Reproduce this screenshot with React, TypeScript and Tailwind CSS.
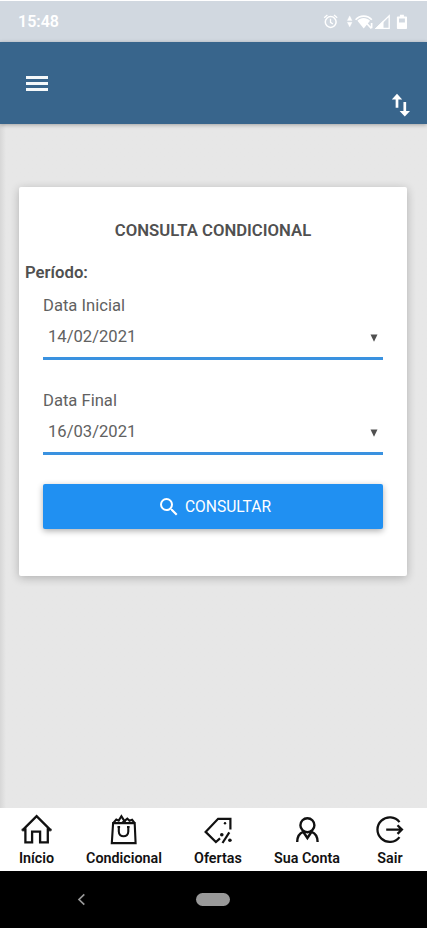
import type { ReactNode } from "react";

interface DateFieldProps {
  label: string;
  value: string;
}

interface NavItem {
  label: string;
  icon: ReactNode;
  width: string;
}

function StatusIcons() {
  return (
    <svg width="86" height="20" viewBox="0 0 86 20" fill="none" stroke="#fff">
      {/* alarm */}
      <circle cx="7.7" cy="10" r="5.4" strokeWidth="1.5" />
      <path d="M7.5 6.700v3.700l2.400 1.600M1.200 5.800l3.200-2.800M11 3l3.200 2.800" strokeWidth="1.3" />
      {/* data arrows */}
      <path d="M24.300 8.500 26.700 3.800 29.100 8.500zM24.300 10.300 26.700 15 29.100 10.300z" fill="#fff" strokeWidth=".3" />
      {/* wifi */}
      <path d="M32.600 7.800C36.800 2.900 44.600 2.900 48.800 7.800" strokeWidth="1.6" />
      <path d="M34.400 8.700C38 5.100 43.200 5.100 47 8.700L40.700 16.500z" fill="#fff" stroke="none" />
      <path d="M43.800 11.500 48.400 16.500M48.600 11v5.200" strokeWidth="1.7" />
      {/* signal */}
      <path d="M53.500 16.300 66.200 3.800V16.300z" strokeWidth="1.3" />
      <path d="M51.700 17 60.500 8.400V17z" fill="#fff" stroke="none" />
      {/* battery */}
      <path
        d="M74.700 4.500h2.200V2.700h4v1.800h2.300q.8 0 .8.8v10.900q0 .8-.8.8h-8.500q-.8 0-.8-.8V5.300q0-.8.8-.8zM76 6.600v3.800h5.900V6.600z"
        fill="#fff"
        fillRule="evenodd"
        stroke="none"
      />
    </svg>
  );
}

function HomeIcon() {
  return (
    <svg width="32" height="32" viewBox="0.6 0 32 32" fill="none" stroke="#111" strokeWidth="2.3">
      <path d="M2.200 17.100 16.200 3.200 30.200 17.100M5 15.200v14.200h6.700V18.600h8v10.800h7.700V15.200" />
      <path d="M1.700 15.800v2h3.300M30.700 15.800v2h-3.400" strokeWidth="1" />
    </svg>
  );
}

function BagIcon() {
  return (
    <svg width="32" height="32" viewBox="0.300 0.300 32 32" fill="none" stroke="#111" strokeWidth="2.1">
      <path d="M5.400 10.400h21.600l.9 20H4.100zM5.400 10.400 8.600 6.800 11 7.900 13.700 3.600 17.500 9.700M14.500 10.200l5.100-4.300 2.200 2.200 2.600-1 2.600 3.300" />
      <path d="M11.100 14.300v4.600c0 6.200 9.500 6.200 9.500 0V14.300M9.800 14.300h2.600M19.300 14.300h2.600" strokeWidth="2.1" />
    </svg>
  );
}

function TagIcon() {
  return (
    <svg width="32" height="32" viewBox="0 0 32 32" fill="none" stroke="#111" strokeWidth="2.200">
      <path d="M28.400 16.500V5.900L16.100 5.800 3.600 18.900 13.900 29 18 25.400" />
      <path d="M27.300 19.300 20.500 30" />
      <circle cx="23" cy="10.200" r="1.200" fill="#111" stroke="none" />
      <circle cx="19.800" cy="21.700" r="1.800" fill="#111" stroke="none" />
      <circle cx="27.900" cy="27.200" r="1.800" fill="#111" stroke="none" />
    </svg>
  );
}

function UserIcon() {
  return (
    <svg width="32" height="32" viewBox="0 0 32 32" fill="none" stroke="#111" strokeWidth="2.400">
      <circle cx="16.400" cy="12.200" r="7" />
      <path d="M6.200 29c0-6 2.800-9 6-10.200l4.200 6.200 4.200-6.200c3.200 1.200 6 4.200 6 10.200" />
    </svg>
  );
}

function ExitIcon() {
  return (
    <svg width="32" height="32" viewBox="0.800 0.400 32 32" fill="none" stroke="#111" strokeWidth="2.300">
      <path d="M26.300 9.500A12.300 12.300 0 1 0 26.300 24.500M13 17H28.500M24.300 12.700 28.700 17 24.300 21.300" />
    </svg>
  );
}

const navItems: NavItem[] = [
  { label: "Início", icon: <HomeIcon />, width: "w-[73px]" },
  { label: "Condicional", icon: <BagIcon />, width: "w-[102px]" },
  { label: "Ofertas", icon: <TagIcon />, width: "w-[86px]" },
  { label: "Sua Conta", icon: <UserIcon />, width: "w-[92px]" },
  { label: "Sair", icon: <ExitIcon />, width: "w-[74px]" },
];

function DateField({ label, value }: DateFieldProps) {
  return (
    <label className="block h-[66px] border-b-[3px] border-[#3a92e0]">
      <span className="block text-[16.6px] leading-[24px] text-[#616161]">{label}</span>
      <span className="flex h-[38px] items-center justify-between px-[5px] text-[16.6px] text-[#616161]">
        {value}
        <svg className="mt-0.5" width="8" height="8" viewBox="0 0 8 8" fill="#505050">
          <path d="M.500.500h7L4 7.800z" />
        </svg>
      </span>
    </label>
  );
}

export default function App() {
  return (
    <div className="flex h-[929px] w-[427px] flex-col overflow-hidden bg-[#e7e7e7] font-['Roboto',sans-serif]">
      <div className="flex h-[42px] shrink-0 items-center justify-between border-t border-white bg-[#d1d8e0] px-[18px]">
        <span className="text-[16px] font-semibold leading-none text-white">15:48</span>
        <StatusIcons />
      </div>

      <header className="z-10 flex h-[82px] shrink-0 justify-between bg-[#38658c] pl-[26px] pr-[17px] shadow-[0_1px_4px_rgba(0,0,0,0.3)]">
        <button className="flex h-[83px] flex-col justify-center gap-[3px]" aria-label="Menu">
          <span className="h-[3px] w-[22px] bg-[#f4f8fa]" />
          <span className="h-[3px] w-[22px] bg-[#f4f8fa]" />
          <span className="h-[3px] w-[22px] bg-[#f4f8fa]" />
        </button>
        <button className="self-end pb-[7px]" aria-label="Ordenar">
          <svg width="19" height="24" viewBox="0 0 19 24" fill="none" stroke="#fff">
            <path d="M6 14.800V4M13.800 9v11" strokeWidth="2.700" />
            <path d="M.800 6.400 6 .800l5.200 5.600zM8.600 18l5.200 5.600L19 18z" fill="#fff" stroke="none" />
          </svg>
        </button>
      </header>

      <main className="flex-1 bg-linear-to-r from-[#d7d7d7] to-[#e7e7e7] to-[6px] px-[19px] pt-[63px]">
        <section className="h-[389px] w-[388px] rounded-[2px] bg-white px-[24px] pt-[32px] text-[#505050] shadow-[0_2px_10px_rgba(0,0,0,0.24)]">
          <h1 className="text-center text-[16.7px] font-semibold leading-[24px]">CONSULTA CONDICIONAL</h1>
          <h2 className="-ml-[18px] mt-[18px] text-[16.7px] font-semibold leading-[24px]">Período:</h2>
          <div className="mt-[9px] flex flex-col gap-[29px]">
            <DateField label="Data Inicial" value="14/02/2021" />
            <DateField label="Data Final" value="16/03/2021" />
          </div>
          <button className="mt-[29px] flex h-[45px] w-full items-center justify-center gap-[4px] rounded-[2px] bg-[#2090f2] pl-[2px] text-[15.6px] text-white shadow-[0_2px_6px_rgba(0,0,0,0.32)]">
            <svg width="24" height="24" viewBox="0 0 24 24" fill="currentColor">
              <path d="M15.500 14h-.790l-.280-.270A6.470 6.470 0 0 0 16 9.500 6.500 6.500 0 1 0 9.500 16c1.610 0 3.090-.590 4.230-1.570l.270.280v.790l5 4.990L20.490 19zm-6 0a4.500 4.500 0 1 1 0-9 4.500 4.500 0 0 1 0 9z" />
            </svg>
            <span className="pt-[2px]">CONSULTAR</span>
          </button>
        </section>
      </main>

      <nav className="flex h-[63px] shrink-0 bg-white pt-[5px]">
        {navItems.map((item) => (
          <a
            key={item.label}
            className={`${item.width} flex shrink-0 flex-col items-center whitespace-nowrap text-[14.3px] font-semibold leading-[20px] text-[#111]`}
          >
            {item.icon}
            <span className="mt-[3px]">{item.label}</span>
          </a>
        ))}
      </nav>

      <div className="flex h-[58px] shrink-0 items-center border-b border-white bg-black pl-[77px]">
        <svg width="9" height="13" viewBox="0 0 9 13" fill="none" stroke="#999" strokeWidth="1.700">
          <path d="M7.300 1.300 2 6.500l5.300 5.200" />
        </svg>
        <span className="ml-[110px] h-[13px] w-[34px] rounded-full bg-[#999]" />
      </div>
    </div>
  );
}
